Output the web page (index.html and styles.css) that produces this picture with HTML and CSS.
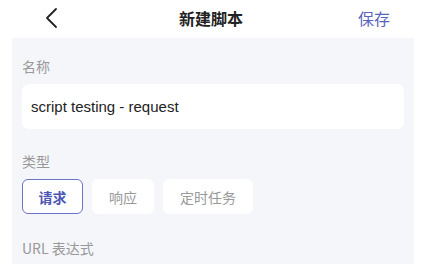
FILE: index.html
```html
<!DOCTYPE html>
<html lang="zh">
  <head>
    <meta charset="UTF-8" />
    <meta name="viewport" content="width=device-width, initial-scale=1.0" />
    <title>新建脚本</title>
    <link rel="stylesheet" href="styles.css">
  </head>
  <body>
    <!-- Top bar -->
    <header class="topbar">
      <a class="back" href="#">
        <svg width="14" height="22" viewBox="0 0 14 22">
          <path d="M12 2 L3 11 L12 20" fill="none" stroke="#222" stroke-width="1.8" stroke-linecap="round" stroke-linejoin="round" />
        </svg>
      </a>
      <h1 class="title">新建脚本</h1>
      <a class="save" href="#">保存</a>
    </header>

    <!-- Form -->
    <main class="panel">
      <div class="label">名称</div>
      <div class="input">script testing - request</div>

      <div class="label">类型</div>
      <div class="types">
        <button class="type active">请求</button>
        <button class="type">响应</button>
        <button class="type">定时任务</button>
      </div>

      <div class="label">URL 表达式</div>
    </main>
  </body>
</html>
```

FILE: styles.css
```css
body {
  margin: 0;
  padding: 0;
  background: #fff;
  font-family: "Noto Sans CJK SC", "Noto Sans", "Liberation Sans", sans-serif;
  color: #222;
  height: 100vh;
  overflow: hidden;
}
.topbar {
  height: 38px;
  display: flex;
  align-items: center;
  justify-content: space-between;
  padding: 0 32px 0 44px;
  position: relative;
}
.back {
  display: flex;
  align-items: center;
  height: 22px;
  margin-top: -2px;
}
.title {
  position: absolute;
  left: 0;
  right: 0;
  text-align: center;
  margin: -3px 0 0;
  font-size: 16px;
  font-weight: 700;
  color: #222;
  pointer-events: none;
}
.save {
  font-size: 16px;
  color: #5a64bd;
  text-decoration: none;
  margin-top: -3px;
}
.panel {
  margin: 0 8px 0 12px;
  background: #f5f6fa;
  padding: 18px 10px 0 10px;
  height: calc(100vh - 38px);
  box-sizing: border-box;
  overflow: hidden;
}
.label {
  font-size: 14px;
  color: #999;
  line-height: 20px;
  margin-bottom: 8px;
}
.input {
  background: #fff;
  border-radius: 7px;
  height: 45px;
  display: flex;
  align-items: center;
  padding: 0 9px;
  font-family: "Liberation Sans", "Noto Sans", sans-serif;
  font-size: 15px;
  color: #222;
  margin-bottom: 22px;
}
.types {
  display: flex;
  gap: 9px;
  margin-bottom: 24px;
}
.type {
  height: 35px;
  padding: 0 17px;
  border: none;
  background: #fff;
  border-radius: 6px;
  font-family: inherit;
  font-size: 14px;
  color: #999;
}
.type.active {
  border: 1.5px solid #6b74c7;
  color: #4c55b3;
  font-weight: 700;
  padding: 0 15.5px;
}
```
